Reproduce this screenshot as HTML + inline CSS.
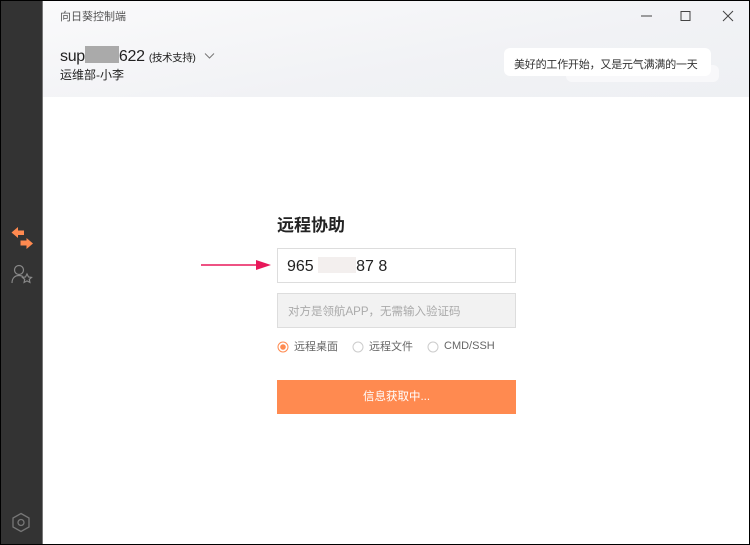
<!DOCTYPE html>
<html><head><meta charset="utf-8"><style>
*{margin:0;padding:0;box-sizing:border-box}
body{width:750px;height:545px;overflow:hidden;background:#000;font-family:"Liberation Sans","Noto Sans CJK SC",sans-serif;position:relative}
.win{position:absolute;left:1px;top:1px;width:748px;height:543px;background:#fff;overflow:hidden}
.side{position:absolute;left:0;top:0;width:41px;height:543px;background:#333}
.sl{position:absolute;left:41px;top:0;width:1px;height:543px;background:#777}
.hdr{position:absolute;left:42px;top:0;width:706px;height:96px;background:linear-gradient(170deg,#fafafb 0%,#f1f2f5 60%,#eef0f3 100%)}
.t{position:absolute;font-size:12px;color:#666}
.bub{position:absolute;background:#fff;border-radius:6px}
.abs{position:absolute}
</style></head><body><div class="win">
<div class="side"></div><div class="sl"></div>
<div class="hdr"></div>
<div class="t" style="left:59px;top:7px;font-size:11px;color:#555">向日葵控制端</div>
<div class="abs" style="left:59px;top:45px;font-size:16px;color:#222;letter-spacing:-0.3px">sup<span style="display:inline-block;width:34px;height:17px;background:#aaa;vertical-align:-2px"></span>622 <span style="font-size:10.5px;letter-spacing:-0.4px">(技术支持)</span></div>
<svg class="abs" style="left:203px;top:51px" width="11" height="8"><path d="M1 1.5L5.5 6L10 1.5" stroke="#777" fill="none"/></svg>
<div class="abs" style="left:59px;top:65px;font-size:12px;color:#222">运维部-小李</div>
<svg class="abs" style="left:640px;top:8px" width="100" height="14"><path d="M0 7H11" stroke="#444"/><path d="M40 2.5h9v9h-9z" stroke="#444" fill="none"/><path d="M82 2L92 12M92 2L82 12" stroke="#444"/></svg>
<div class="bub" style="left:565px;top:64px;width:153px;height:17px;background:#f8f8fa"></div>
<div class="bub" style="left:503px;top:47px;width:207px;height:28px"></div>
<div class="abs" style="left:513px;top:55px;font-size:11px;color:#333;letter-spacing:-0.2px">美好的工作开始，又是元气满满的一天</div>
<svg class="abs" style="left:10px;top:226px" width="23" height="23"><path d="M0.5 5.5L7 0V3.5H13V8H7V11Z" fill="#ff8a50"/><path d="M22 16.5L15.5 11V13.5H9.5V18.5H15.5V22Z" fill="#ff8a50"/></svg>
<svg class="abs" style="left:10px;top:263px" width="22" height="20" fill="none" stroke="#888" stroke-width="1.2"><circle cx="8" cy="6" r="4.5"/><path d="M1 19C1 14 4 11.5 8 11.5C10 11.5 11 12 12 12.5"/><path d="M16 10l1.5 3 3 .4-2.2 2 .6 3-2.9-1.5-2.9 1.5.6-3-2.2-2 3-.4z"/></svg>
<svg class="abs" style="left:10px;top:511px" width="20" height="22" fill="none" stroke="#777" stroke-width="1.3"><path d="M10 1.5L18 6v9l-8 4.5L2 15V6z"/><circle cx="10" cy="10.5" r="3"/></svg>
<div class="abs" style="left:276px;top:210px;font-size:17px;font-weight:bold;color:#222">远程协助</div>
<svg class="abs" style="left:199px;top:258px" width="72" height="12"><path d="M1 6H58" stroke="#e8185a" stroke-width="1.5"/><path d="M56 1L71 6L56 11Z" fill="#e8185a"/></svg>
<div class="abs" style="left:276px;top:247px;width:239px;height:35px;border:1px solid #ddd;background:#fff"></div>
<div class="abs" style="left:286px;top:256px;font-size:16px;color:#222">965 <span style="display:inline-block;width:38px;height:16px;background:#f3efee;vertical-align:-2px"></span>87 8</div>
<div class="abs" style="left:276px;top:292px;width:239px;height:35px;border:1px solid #ddd;background:#f2f2f2"></div>
<div class="abs" style="left:287px;top:302px;font-size:11.5px;color:#aaa">对方是领航APP，无需输入验证码</div>
<svg class="abs" style="left:276px;top:340px" width="12" height="12"><circle cx="6" cy="6" r="5" fill="none" stroke="#ff8a50"/><circle cx="6" cy="6" r="2.8" fill="#ff8a50"/></svg>
<div class="abs" style="left:293px;top:337px;font-size:11px;color:#666">远程桌面</div>
<svg class="abs" style="left:351px;top:340px" width="12" height="12"><circle cx="6" cy="6" r="5" fill="none" stroke="#ccc"/></svg>
<div class="abs" style="left:368px;top:337px;font-size:11px;color:#666">远程文件</div>
<svg class="abs" style="left:426px;top:340px" width="12" height="12"><circle cx="6" cy="6" r="5" fill="none" stroke="#ccc"/></svg>
<div class="abs" style="left:443px;top:339px;font-size:11px;color:#666">CMD/SSH</div>
<div class="abs" style="left:276px;top:379px;width:239px;height:34px;background:#ff8a50;color:#fff;font-size:11.5px;text-align:center;line-height:34px">信息获取中...</div>
</div></body></html>
